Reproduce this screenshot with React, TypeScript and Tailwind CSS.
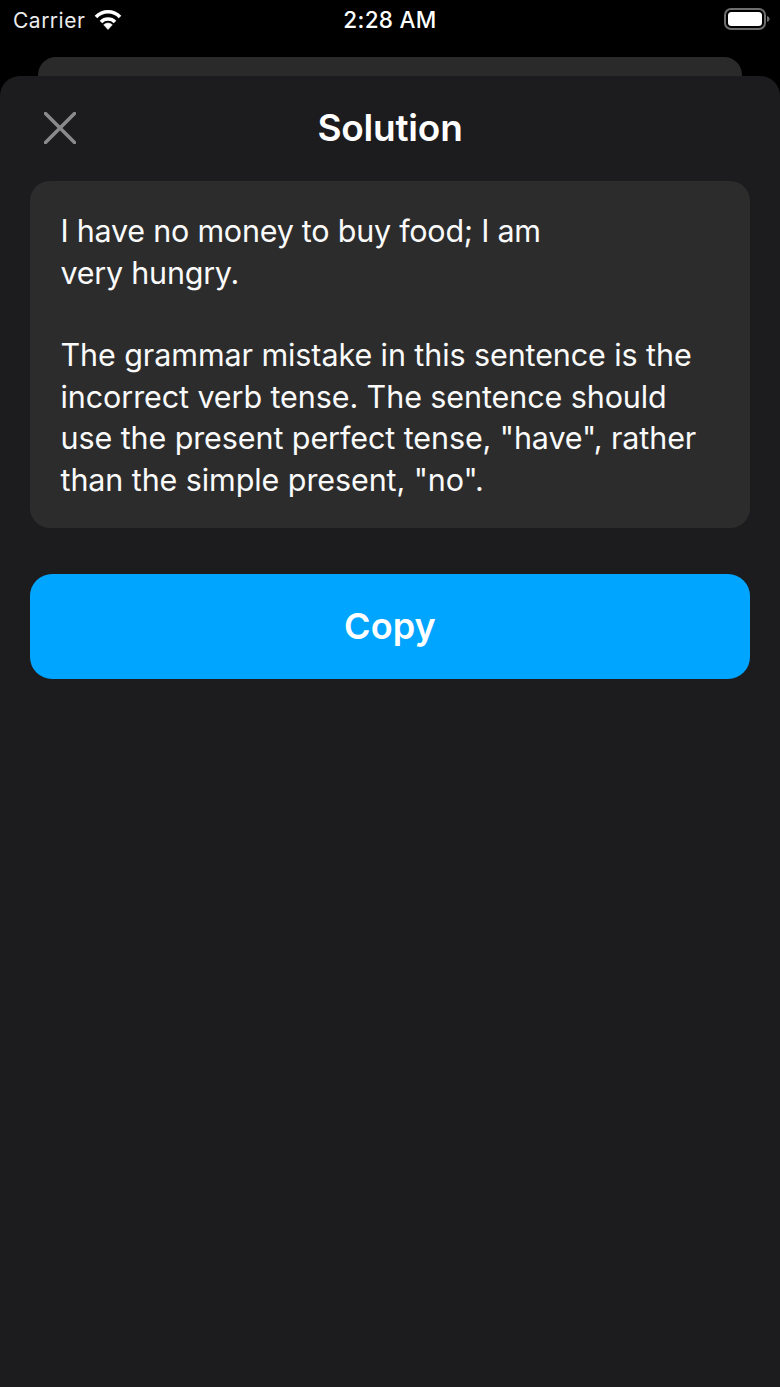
import React from 'react'

const font = { fontFamily: 'Inter, "Liberation Sans", sans-serif' }

function WifiIcon() {
  return (
    <svg width="28" height="21" viewBox="0 0 28 21" className="mt-[1px] block">
      <path d="M2 8a16.500 16.500 0 0 1 24 0" stroke="#fff" strokeWidth="3.600" fill="none" />
      <path d="M7 13a9.800 9.800 0 0 1 14 0" stroke="#fff" strokeWidth="3.600" fill="none" />
      <path d="M14 20.500l-4.300-4.700a6 6 0 0 1 8.600 0z" fill="#fff" stroke="#fff" strokeWidth="0.600" strokeLinejoin="round" />
    </svg>
  )
}

function BatteryIcon() {
  return (
    <svg width="46" height="22" viewBox="0 0 46 22" className="block">
      <rect x="1" y="1" width="40" height="20" rx="6" fill="none" stroke="#6e6e6e" strokeWidth="2" />
      <rect x="4" y="4" width="34" height="14" rx="3.500" fill="#fff" />
      <path d="M43 8v6c1.500-.5 2.600-1.700 2.600-3S44.500 8.500 43 8z" fill="#6e6e6e" />
    </svg>
  )
}

function StatusBar() {
  return (
    <div className="relative flex h-[57px] shrink-0 items-start justify-between pl-[13px] pr-[10px] pt-[8px] text-white">
      <div className="flex items-start gap-[9px]">
        <span className="text-[21px] leading-[26px] tracking-[0.5px] text-[#ececec]">Carrier</span>
        <WifiIcon />
      </div>
      <span className="absolute left-0 right-0 top-[7px] text-center text-[22.500px] font-medium leading-[26px] tracking-[0.3px]">2:28 AM</span>
      <BatteryIcon />
    </div>
  )
}

export default function App() {
  return (
    <div className="flex h-[1387px] w-[780px] flex-col overflow-hidden bg-black" style={font}>
      <StatusBar />

      {/* card behind the sheet */}
      <div className="mx-[38px] h-[19px] shrink-0 rounded-t-[18px] bg-[#2a2a2b]" />

      <div className="flex flex-1 flex-col rounded-t-[20px] bg-[#1c1c1e] px-[30px]">
        <div className="relative flex h-[105px] shrink-0 items-center justify-center pb-[2px]">
          <button className="absolute left-[14px] top-[36px]">
            <svg width="32" height="32" viewBox="0 0 32 32" className="block">
              <path d="M1.500 1.500l29 29M30.500 1.500l-29 29" stroke="#8a8a8c" strokeWidth="3.500" strokeLinecap="round" fill="none" />
            </svg>
          </button>
          <h1 className="text-[37px] font-semibold leading-[44px] tracking-[-0.2px] text-white">Solution</h1>
        </div>

        <div className="h-[347px] shrink-0 rounded-[20px] bg-[#2c2c2d] pl-[30.500px] pr-[20px] pt-[29px] text-[30.500px] font-[370] leading-[41.500px] text-[#fafafa]">
          <p className="tracking-[-0.24px]">
            I have no money to buy food; I am
            <br />
            very hungry.
          </p>
          <p className="mt-[41px] tracking-[-0.09px]">
            The grammar mistake in this sentence is the
            <br />
            incorrect verb tense. The sentence should
            <br />
            use the present perfect tense, "have", rather
            <br />
            than the simple present, "no".
          </p>
        </div>

        <button className="mt-[46px] flex h-[105px] shrink-0 items-center justify-center rounded-[22px] bg-[#00a5ff] pb-[2px] text-[36px] font-semibold tracking-[0.1px] text-white">
          Copy
        </button>
      </div>
    </div>
  )
}
